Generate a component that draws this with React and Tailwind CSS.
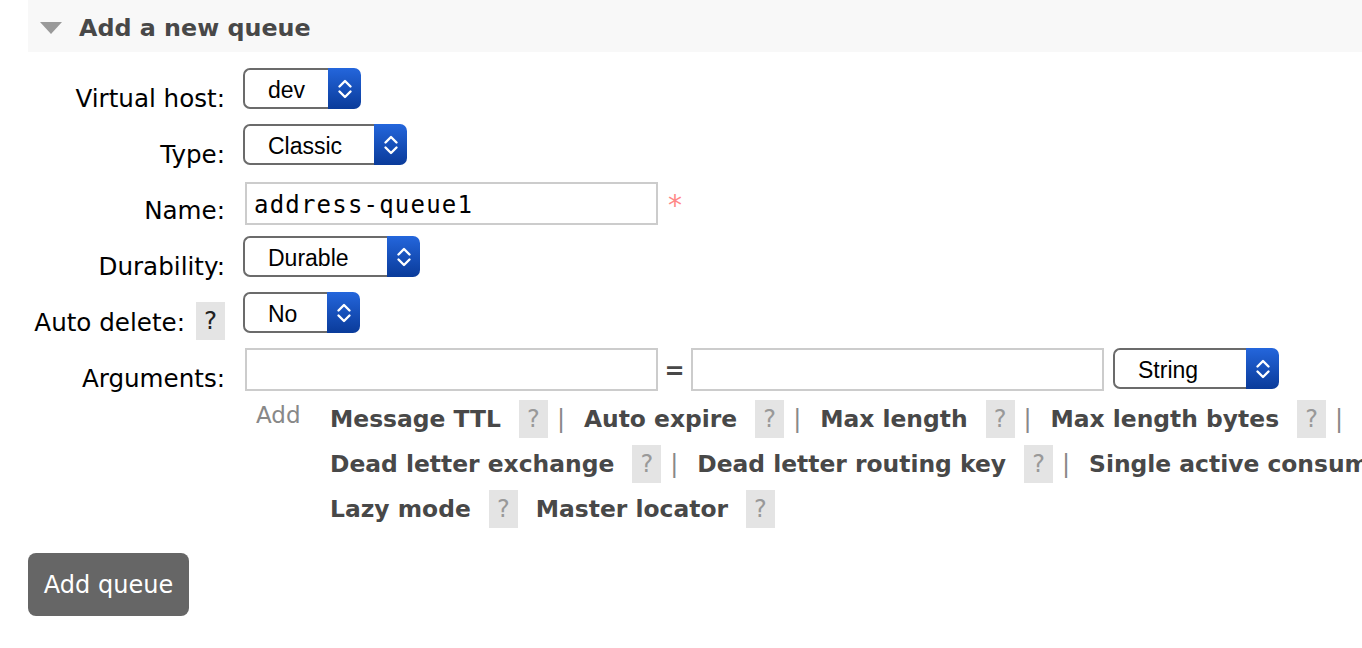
const argLines = [
  [
    { label: 'Message TTL', sep: true },
    { label: 'Auto expire', sep: true },
    { label: 'Max length', sep: true },
    { label: 'Max length bytes', sep: true },
    { label: 'Overflow behaviour', sep: false },
  ],
  [
    { label: 'Dead letter exchange', sep: true },
    { label: 'Dead letter routing key', sep: true },
    { label: 'Single active consumer', sep: true },
    { label: 'Maximum priority', sep: false },
  ],
  [
    { label: 'Lazy mode', sep: false },
    { label: 'Master locator', sep: false },
  ],
];

function Select({ value, width }) {
  return (
    <div className={`flex h-[41px] shrink-0 ${width}`}>
      <div className="flex flex-1 items-center rounded-l-[7px] border-2 border-r-0 border-[#6b6b6b] bg-white pl-[23px] pt-[4px] font-['Liberation_Sans',sans-serif] text-[23px] text-black">
        {value}
      </div>
      <div className="flex w-[33px] items-center justify-center rounded-r-[7px] bg-linear-to-b from-[#2466dc] to-[#0a3b9a]">
        <svg width="16" height="22" viewBox="0 0 16 22" fill="none">
          <path d="M2.5 8.5 L8 3 L13.5 8.5" stroke="white" strokeWidth="2.4" strokeLinecap="round" strokeLinejoin="round" />
          <path d="M2.5 13.5 L8 19 L13.5 13.5" stroke="white" strokeWidth="2.4" strokeLinecap="round" strokeLinejoin="round" />
        </svg>
      </div>
    </div>
  );
}

function Row({ label, help, children }) {
  return (
    <div className="flex h-[56px]">
      <div className="flex w-[197px] shrink-0 items-start justify-end text-[24.6px] leading-[28px] text-black">
        <span className="pt-[17px]">{label}</span>
        {help && (
          <span className="ml-[11px] mt-[10px] flex h-[38px] w-[29px] items-center justify-center bg-[#e4e4e4] text-[#222]">
            ?
          </span>
        )}
      </div>
      <div className="ml-[18px] flex items-start">{children}</div>
    </div>
  );
}

function HelpBox() {
  return (
    <span className="ml-[18px] flex h-[38px] w-[29px] items-center justify-center bg-[#e4e4e4] text-[24px] font-normal text-[#999]">
      ?
    </span>
  );
}

export default function App() {
  return (
    <div className="min-h-screen overflow-hidden bg-white pl-[28px] font-['DejaVu_Sans',sans-serif]">
      {/* Section header */}
      <div className="flex h-[52px] items-center bg-[#f8f8f8] pt-[3px]">
        <svg className="ml-[12px]" width="22" height="12" viewBox="0 0 22 12">
          <polygon points="0,0 22,0 11,12" fill="#9a9a9a" />
        </svg>
        <h2 className="ml-[17px] text-[23.8px] font-bold leading-[28px] text-[#484848]">Add a new queue</h2>
      </div>

      <div className="mt-[16px]">
        <Row label="Virtual host:">
          <Select value="dev" width="w-[118px]" />
        </Row>
        <Row label="Type:">
          <Select value="Classic" width="w-[164px]" />
        </Row>
        <Row label="Name:">
          <input
            defaultValue="address-queue1"
            className="ml-[2px] mt-[2px] h-[43px] w-[413px] border-2 border-[#cccccc] px-[7px] pt-[2px] font-['DejaVu_Sans_Mono',monospace] text-[24px] tracking-[1.2px] text-black outline-none"
          />
          <span className="ml-[10px] mt-[12px] text-[28px] leading-[28px] text-[#f88]">*</span>
        </Row>
        <Row label="Durability:">
          <Select value="Durable" width="w-[177px]" />
        </Row>
        <Row label="Auto delete:" help>
          <Select value="No" width="w-[117px]" />
        </Row>

        {/* Arguments */}
        <div className="flex h-[48px]">
          <div className="flex w-[197px] shrink-0 items-start justify-end text-[24.6px] leading-[28px] text-black">
            <span className="pt-[17px]">Arguments:</span>
          </div>
          <div className="ml-[18px] flex items-start">
            <input className="ml-[2px] h-[43px] w-[413px] border-2 border-[#cccccc] outline-none" />
            <span className="flex h-[43px] w-[33px] items-center justify-center pt-[3px] text-[24px] font-bold text-[#484848]">=</span>
            <input className="h-[43px] w-[413px] border-2 border-[#cccccc] outline-none" />
            <div className="ml-[9px]">
              <Select value="String" width="w-[166px]" />
            </div>
          </div>
        </div>

        {/* Argument shortcuts */}
        <div className="ml-[215px] flex">
          <div className="w-[87px] shrink-0 pl-[13px] pt-[6px] text-[23px] leading-[26px] text-[#888]">Add</div>
          <div className="whitespace-nowrap">
            {argLines.map((line, i) => (
              <div key={i} className="flex h-[45px] items-center text-[23.4px] font-bold leading-[28px] text-[#484848]">
                {line.map((item, j) => (
                  <div key={item.label} className={`flex items-center ${j > 0 && !line[j - 1].sep ? 'ml-[18px]' : ''}`}>
                    <span>{item.label}</span>
                    <HelpBox />
                    {item.sep && (
                      <span className="ml-[9px] mr-[19px] w-[8px] text-center text-[24px] font-normal text-[#888]">|</span>
                    )}
                  </div>
                ))}
              </div>
            ))}
          </div>
        </div>

        <button className="mt-[22px] h-[63px] w-[161px] rounded-[8px] bg-[#666666] text-[24px] text-white">
          Add queue
        </button>
      </div>
    </div>
  );
}
